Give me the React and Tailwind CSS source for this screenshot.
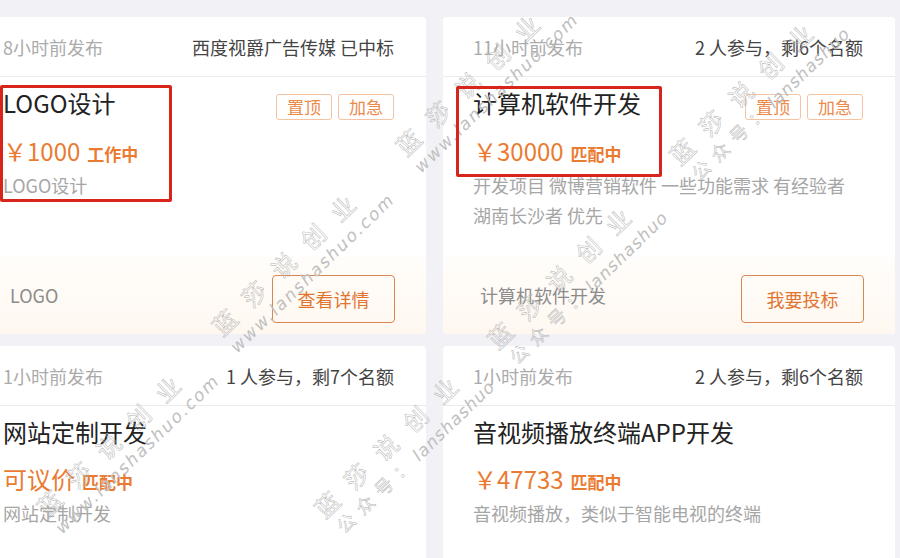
const jobs = [
  {
    time: '8小时前发布',
    info: '西度视爵广告传媒 已中标',
    title: 'LOGO设计',
    tags: true,
    price: '￥1000',
    status: '工作中',
    desc: ['LOGO设计'],
    footer: 'LOGO',
    action: '查看详情',
  },
  {
    time: '11小时前发布',
    info: '2 人参与，剩6个名额',
    title: '计算机软件开发',
    tags: true,
    price: '￥30000',
    status: '匹配中',
    desc: ['开发项目 微博营销软件 一些功能需求 有经验者', '湖南长沙者 优先'],
    footer: '计算机软件开发',
    action: '我要投标',
  },
  {
    time: '1小时前发布',
    info: '1 人参与，剩7个名额',
    title: '网站定制开发',
    tags: false,
    price: '可议价',
    status: '匹配中',
    desc: ['网站定制开发'],
    footer: '网站定制开发',
    action: '我要投标',
  },
  {
    time: '1小时前发布',
    info: '2 人参与，剩6个名额',
    title: '音视频播放终端APP开发',
    tags: false,
    price: '￥47733',
    status: '匹配中',
    desc: ['音视频播放，类似于智能电视的终端'],
    footer: '音视频播放终端APP开发',
    action: '我要投标',
  },
]

// watermark tiles: center point, second line type
const marks = [
  { x: 481, y: 87, site: true },
  { x: 755, y: 97, site: false },
  { x: 297, y: 267, site: true },
  { x: 573, y: 281, site: false },
  { x: 122, y: 448, site: true },
  { x: 400, y: 450, site: false },
]

function Tag({ children }) {
  return (
    <span className="h-[26px] px-[10px] border border-[#f4c3a2] rounded-[3px] text-[17px] leading-[24px] text-[#ec8a4a]">
      {children}
    </span>
  )
}

function JobCard({ job }) {
  return (
    <div className="bg-white rounded-[4px] overflow-hidden">
      <div className="h-[60px] pl-[30px] pr-[32px] flex items-center justify-between border-b border-[#ebebeb] text-[18px] leading-[24px]">
        <span className="text-[#ababab]">{job.time}</span>
        <span className="text-[#444]">{job.info}</span>
      </div>

      <div className="h-[180px] pl-[30px] pr-[32px] pt-[10px]">
        <div className="flex items-start justify-between">
          <h3 className="text-[24px] leading-[32px] text-[#222]">{job.title}</h3>
          {job.tags && (
            <div className="mt-[7px] flex gap-[6px]">
              <Tag>置顶</Tag>
              <Tag>加急</Tag>
            </div>
          )}
        </div>
        <div className="mt-[15px] flex items-baseline text-[#ea7b32]">
          <span className="text-[24px] leading-[32px]">{job.price}</span>
          <span className="ml-[7px] text-[17px] font-bold">{job.status}</span>
        </div>
        <p className="mt-[3px] text-[18px] leading-[30px] text-[#a6a6a6]">
          {job.desc.map((line, i) => (
            <span key={i} className="block">{line}</span>
          ))}
        </p>
      </div>

      <div className="h-[77px] pl-[37px] pr-[31px] flex items-center justify-between bg-gradient-to-b from-[#fffdfa] to-[#fff8f1]">
        <span className="text-[18px] text-[#8c8c8c]">{job.footer}</span>
        <button className="w-[123px] h-[48px] mt-[7px] border-[1.5px] border-[#d98652] rounded-[4px] text-[18px] text-[#e2742f]">
          {job.action}
        </button>
      </div>
    </div>
  )
}

function Watermark({ x, y, site }) {
  return (
    <div
      className="pointer-events-none absolute z-10 -translate-x-1/2 -translate-y-1/2 -rotate-[44deg] flex flex-col items-center whitespace-nowrap"
      style={{ left: x, top: y }}
    >
      <span className="text-[24px] leading-[30px] tracking-[17px] text-transparent [-webkit-text-stroke:0.5px_#b4b4b4]">
        蓝莎说创业
      </span>
      {site ? (
        <span className="ml-[14px] text-[17px] leading-[22px] italic tracking-[2px] text-[#c0c0c0] font-['DejaVu_Sans',sans-serif] font-extralight">
          www.lanshashuo.com
        </span>
      ) : (
        <span className="ml-[14px] leading-[22px] text-[#c0c0c0]">
          <span className="text-[18px] tracking-[8px] text-transparent [-webkit-text-stroke:0.5px_#b4b4b4]">公众号：</span>
          <span className="text-[17px] italic tracking-[1px] font-['DejaVu_Sans',sans-serif] font-extralight">lanshashuo</span>
        </span>
      )}
    </div>
  )
}

export default function App() {
  return (
    <div className="relative h-[558px] w-[900px] overflow-hidden bg-[#f1f1f6] font-['Noto_Sans_CJK_SC','Noto_Sans',sans-serif]">
      <div className="pt-[17px] ml-[-27px] grid grid-cols-[453px_452px] gap-x-[17px] gap-y-[12px]">
        {jobs.map((job, i) => (
          <JobCard key={i} job={job} />
        ))}
      </div>

      {marks.map((m, i) => (
        <Watermark key={i} {...m} />
      ))}

      {/* annotation boxes */}
      <div className="absolute z-20 left-0 top-[85px] w-[172px] h-[117px] border-[3px] border-[#d8241a] rounded-[2px]" />
      <div className="absolute z-20 left-[456px] top-[86px] w-[206px] h-[91px] border-[3px] border-[#d8241a] rounded-[2px]" />
    </div>
  )
}
